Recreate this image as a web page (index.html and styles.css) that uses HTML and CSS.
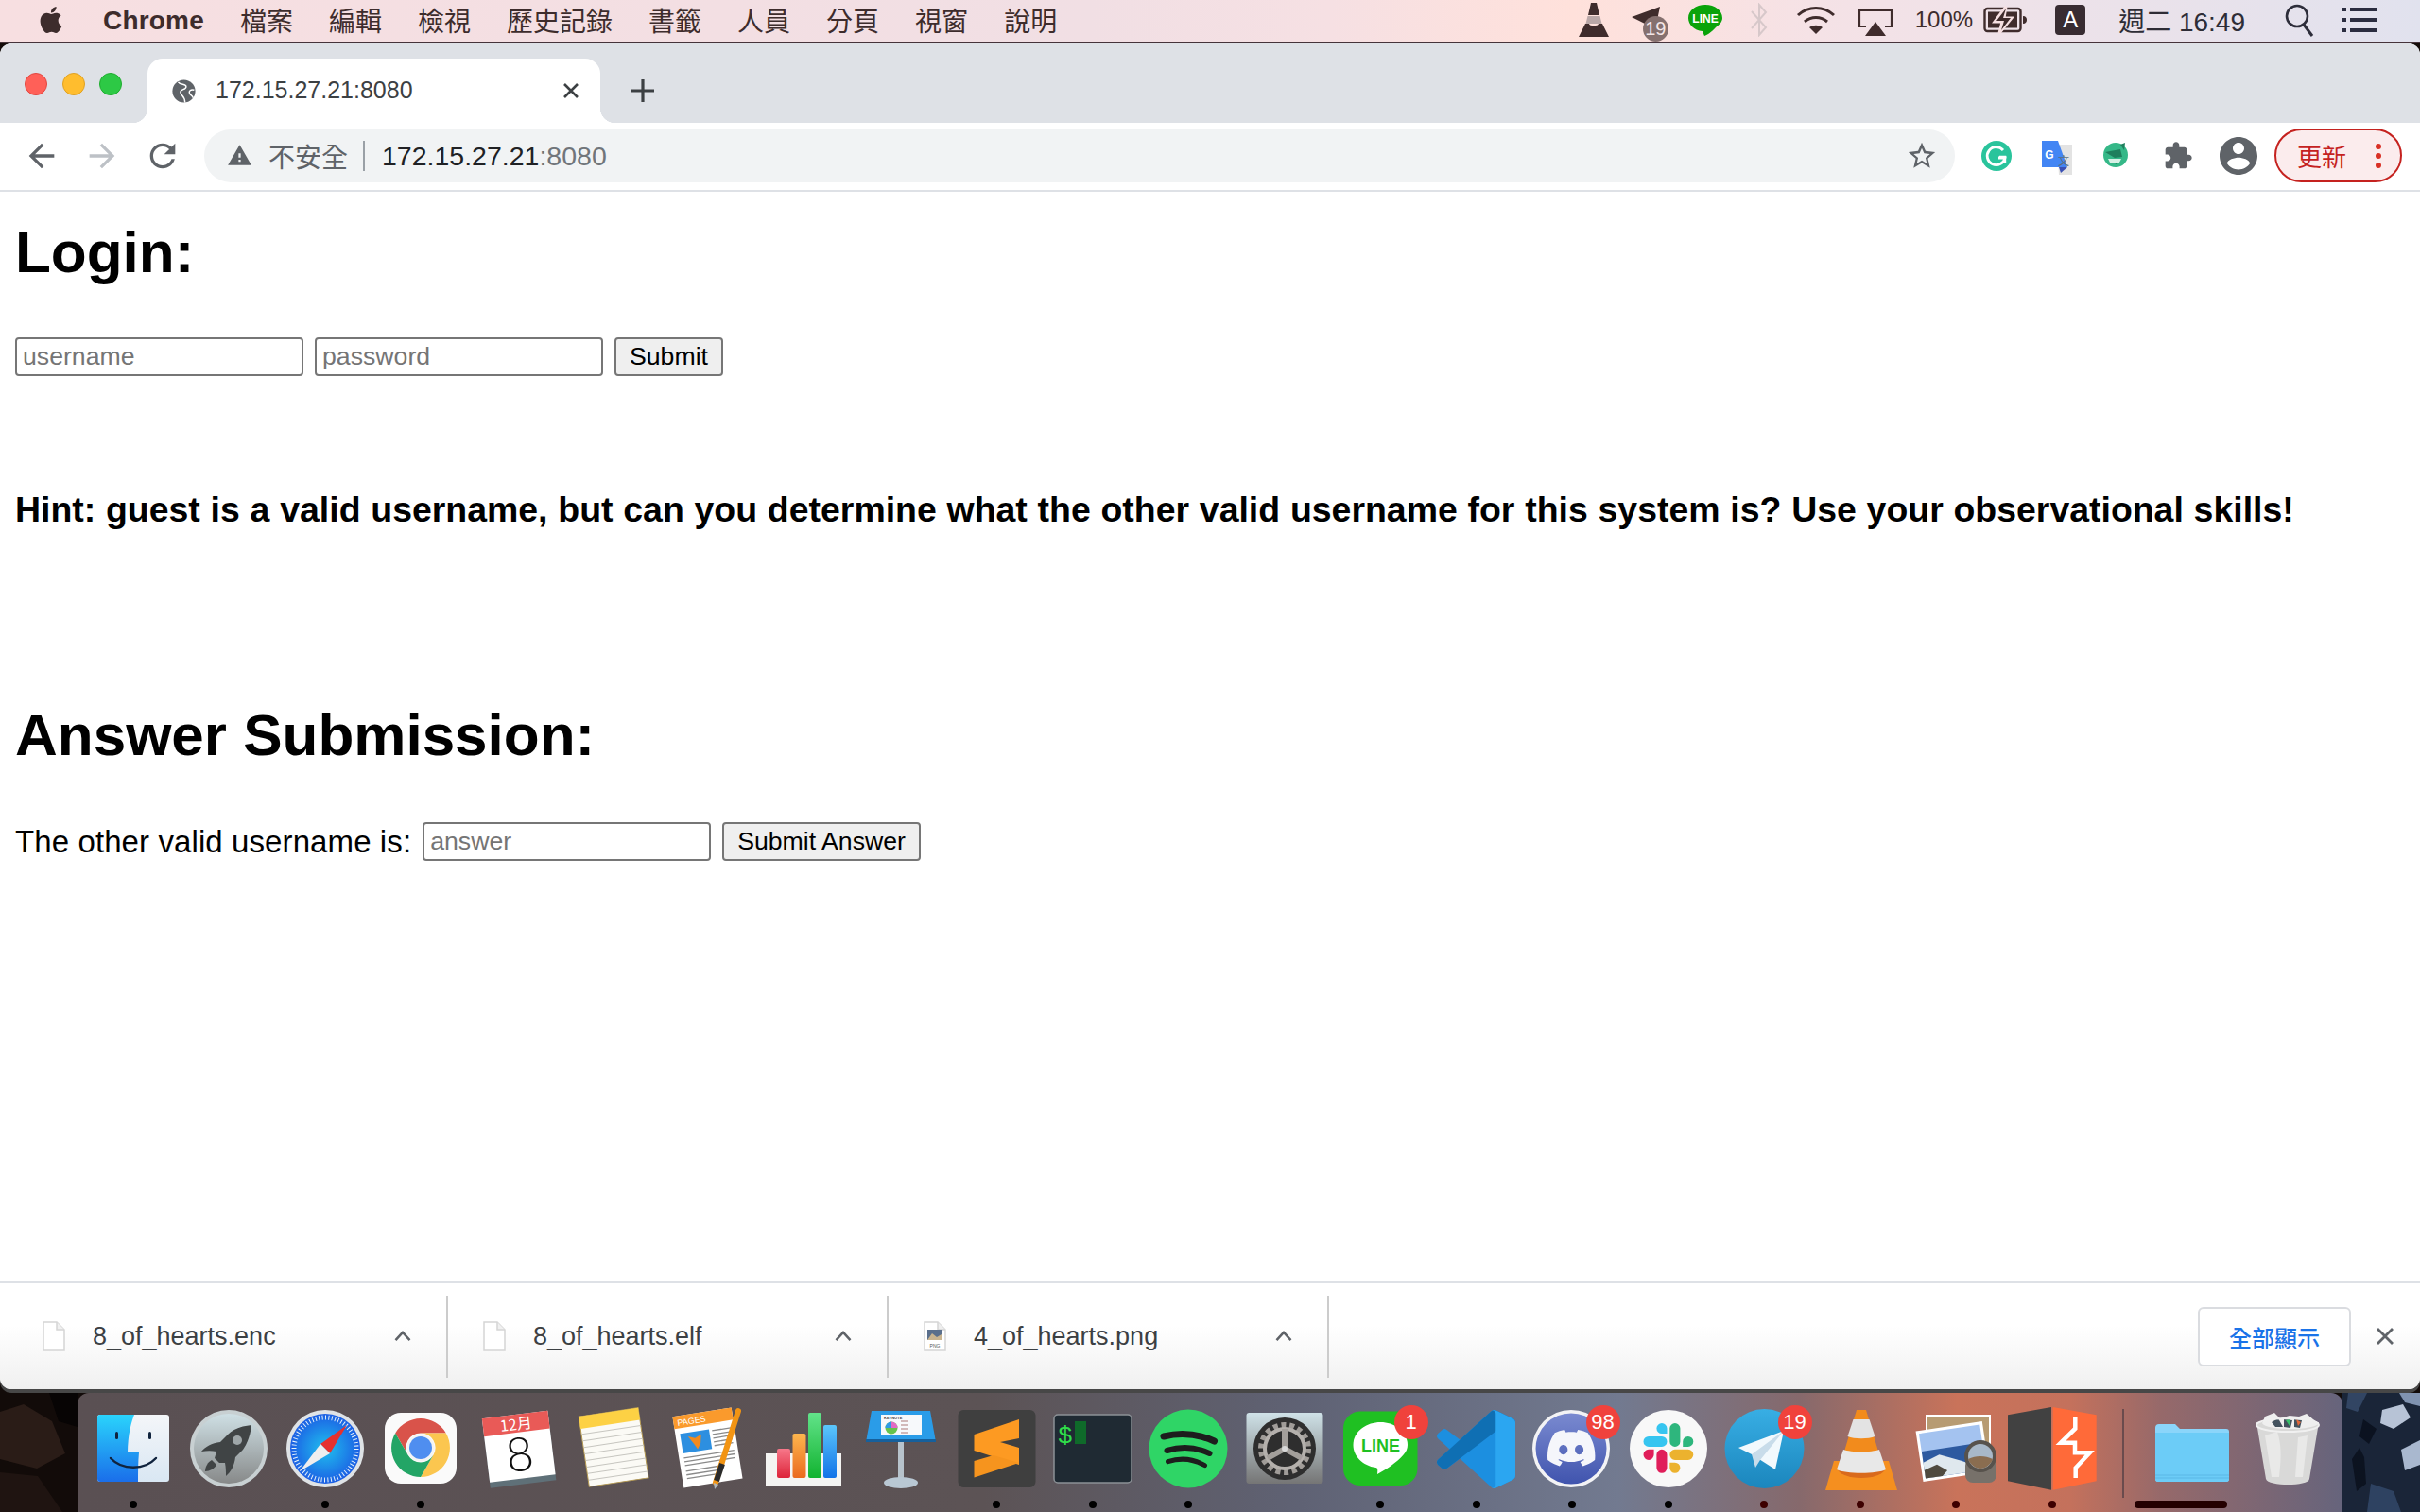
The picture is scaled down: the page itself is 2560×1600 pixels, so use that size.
FILE: index.html
```html
<!DOCTYPE html>
<html lang="zh-Hant">
<head>
    <meta charset="UTF-8">
    <meta name="viewport" content="width=device-width, initial-scale=1.0">
    <title>172.15.27.21:8080</title>
    <link rel="stylesheet" href="styles.css">
</head>
<body>
    <!-- mac menu bar -->
    <header class="menubar">
        <svg class="apple" viewBox="0 0 24 24" width="28" height="32"><path d="M12.152 6.896c-.948 0-2.415-1.078-3.96-1.04-2.04.027-3.91 1.183-4.961 3.014-2.117 3.675-.546 9.103 1.519 12.09 1.013 1.454 2.208 3.09 3.792 3.039 1.52-.065 2.09-.987 3.935-.987 1.831 0 2.35.987 3.96.948 1.637-.026 2.676-1.48 3.676-2.948 1.156-1.688 1.636-3.325 1.662-3.415-.039-.013-3.182-1.221-3.22-4.857-.026-3.04 2.48-4.494 2.597-4.559-1.429-2.09-3.623-2.324-4.39-2.376-2-.156-3.675 1.09-4.61 1.09zM15.53 3.83c.843-1.012 1.4-2.427 1.245-3.83-1.207.052-2.662.805-3.532 1.818-.78.896-1.454 2.338-1.273 3.714 1.338.104 2.715-.688 3.559-1.701"/></svg>
        <nav class="menu-items">
            <span class="app-name">Chrome</span>
            <span>檔案</span>
            <span>編輯</span>
            <span>檢視</span>
            <span>歷史記錄</span>
            <span>書籤</span>
            <span>人員</span>
            <span>分頁</span>
            <span>視窗</span>
            <span>說明</span>
        </nav>
        <div class="status-items">
            <svg viewBox="0 0 32 36" width="32" height="36"><path d="M13 0h6l3 13H10z" fill="#3f2c2c"/><path d="M9.5 14h13l2 8h-17z" fill="#b9a7a7"/><path d="M7 22h4c0 3 10 3 10 0h4l7 14H0z" fill="#3f2c2c"/></svg>
            <div class="status-telegram">
                <svg viewBox="0 0 36 36" width="36" height="36"><path d="M0 15L30 4 25 28 14 22z" fill="#3f2c2c"/></svg>
                <span class="status-badge">19</span>
            </div>
            <svg viewBox="0 0 36 36" width="36" height="36"><path d="M18 2C8 2 0 8 0 16c0 7 6 13 15 14l2 5c1 0 8-4 12-9 4-3 7-6 7-10C36 8 28 2 18 2z" fill="#0aa30a"/><text x="18" y="21" class="line-text">LINE</text></svg>
            <svg viewBox="0 0 30 36" width="30" height="36"><path d="M7 9l15 17-7 8V2l7 8L7 27" fill="none" stroke="#d7c8ca" stroke-width="2"/></svg>
            <svg viewBox="0 0 42 36" width="42" height="36"><g fill="none" stroke="#3f2c2c" stroke-width="3"><path d="M2 13c11-10 27-10 38 0"/><path d="M9 20c7-6 17-6 24 0"/></g><path d="M14 26c4-3 10-3 14 0l-7 7z" fill="#3f2c2c"/></svg>
            <svg viewBox="0 0 36 36" width="36" height="36"><path d="M8 25H1V8h34v17h-7" fill="none" stroke="#3f2c2c" stroke-width="2.2"/><path d="M18 20l11 15H7z" fill="#3f2c2c"/></svg>
            <div class="battery">
                <span>100%</span>
                <svg viewBox="0 0 46 30" width="46" height="30"><rect x="1.5" y="3" width="38" height="24" rx="3" fill="none" stroke="#3f2c2c" stroke-width="2.4"/><rect x="5" y="6.5" width="31" height="17" fill="#3f2c2c"/><path d="M24 1L12 17h8l-3 12 13-16h-8z" fill="#f6e0e2" stroke="#f6e0e2" stroke-width="3"/><path d="M24 3L14 16h8l-3 10 10-13h-8z" fill="#3f2c2c"/><path d="M42 11c3 0 4 2 4 4s-1 4-4 4z" fill="#3f2c2c"/></svg>
            </div>
            <span class="input-source">A</span>
            <span class="clock">週二 16:49</span>
            <svg class="status-search" viewBox="0 0 32 36" width="32" height="36"><circle cx="14" cy="14" r="11" fill="none" stroke="#2d2d3a" stroke-width="2.6"/><path d="M21 23l9 12" stroke="#2d2d3a" stroke-width="3"/></svg>
            <svg viewBox="0 0 36 32" width="36" height="32"><g fill="#2b2d40"><rect x="0" y="3" width="4" height="4"/><rect x="8" y="3" width="28" height="4"/><rect x="0" y="14" width="4" height="4"/><rect x="8" y="14" width="28" height="4"/><rect x="0" y="25" width="4" height="4"/><rect x="8" y="25" width="28" height="4"/></g></svg>
        </div>
    </header>

    <div class="window">
        <div class="tabstrip">
            <div class="traffic-lights">
                <span class="light red"></span>
                <span class="light yellow"></span>
                <span class="light green"></span>
            </div>
            <div class="tab">
                <svg viewBox="0 0 24 24" width="29" height="29"><circle cx="12" cy="12" r="10" fill="#5f6368"/><path d="M7 4c2 3 7 1 7 4s-5 2-5 5 4 3 4 9M21 11c-3-1-5 1-4 3s3 2 3 4" fill="none" stroke="#fff" stroke-width="1.200"/></svg>
                <span class="tab-title">172.15.27.21:8080</span>
                <svg class="tab-close" viewBox="0 0 24 24" width="24" height="24"><path d="M5 5l14 14M19 5L5 19" stroke="#3c4043" stroke-width="2.6"/></svg>
            </div>
            <svg class="new-tab" viewBox="0 0 32 32" width="32" height="32"><path d="M16 4v24M4 16h24" stroke="#3c4043" stroke-width="3.2"/></svg>
        </div>

        <div class="toolbar">
            <svg viewBox="0 0 24 24" width="40" height="40" fill="#5f6368"><path d="M20 11H7.83l5.59-5.59L12 4l-8 8 8 8 1.41-1.41L7.83 13H20v-2z"/></svg>
            <svg viewBox="0 0 24 24" width="40" height="40" fill="#bdc1c6"><path d="M4 11h12.17l-5.59-5.59L12 4l8 8-8 8-1.41-1.41L16.17 13H4v-2z"/></svg>
            <svg viewBox="0 0 24 24" width="40" height="40" fill="#5f6368"><path d="M17.65 6.35C16.2 4.9 14.21 4 12 4c-4.42 0-7.99 3.58-7.99 8s3.57 8 7.99 8c3.73 0 6.84-2.55 7.73-6h-2.08c-.82 2.33-3.04 4-5.65 4-3.31 0-6-2.69-6-6s2.69-6 6-6c1.66 0 3.14.69 4.22 1.78L13 11h7V4l-2.35 2.35z"/></svg>
            <div class="omnibox">
                <svg viewBox="0 0 24 24" width="27" height="27" fill="#5f6368"><path fill-rule="evenodd" d="M1 21h22L12 2zM13 18h-2v-2h2zM13 14h-2v-4h2z"/></svg>
                <span class="not-secure">不安全</span>
                <span class="omni-sep"></span>
                <span class="url">172.15.27.21<span class="url-port">:8080</span></span>
                <svg class="star" viewBox="0 0 24 24" width="34" height="34" fill="#5f6368"><path d="M22 9.24l-7.19-1.03L12 2 9.19 8.22 2 9.24l5.46 4.73L5.82 21 12 17.27 18.18 21l-1.63-7.03L22 9.24zM12 15.4l-3.76 2.27 1-4.28-3.32-2.88 4.38-.38L12 6.1l1.71 4.04 4.38.38-3.32 2.88 1 4.28L12 15.4z"/></svg>
            </div>
            <div class="extensions">
                <svg viewBox="0 0 40 40" width="40" height="40"><circle cx="20" cy="20" r="16" fill="#2ac49c"/><path d="M27 14a9.500 9.500 0 1 0 2 8h-7" fill="none" stroke="#fff" stroke-width="2.800"/><path d="M29 27l0-6-6 0" fill="none" stroke="#fff" stroke-width="2.400"/></svg>
                <svg viewBox="0 0 40 40" width="40" height="40"><path d="M20 8h16v32H22z" fill="#e3e3e3"/><path d="M4 4h17l10 28H4z" fill="#4285f4"/><path d="M22 32h9l-7 6z" fill="#3a50b4"/><text x="12" y="23" class="translate-g">G</text><text x="27" y="30" class="translate-zh">文</text></svg>
                <svg viewBox="0 0 40 40" width="40" height="40"><circle cx="18" cy="19" r="13" fill="#35b888"/><path d="M23 8l5-2-1 8zM7 16l16-3 2 8-8 1zM10 24l13 2-4 3z" fill="#1f7f5d"/><path d="M10 23h14l-2 4H12z" fill="#d6f0e5"/></svg>
                <svg class="puzzle" viewBox="0 0 24 24" fill="#5f6368"><path d="M20.500 11H19V7c0-1.100-.9-2-2-2h-4V3.500C13 2.120 11.880 1 10.500 1S8 2.120 8 3.500V5H4c-1.100 0-1.990.9-1.990 2v3.800H3.500c1.490 0 2.700 1.210 2.700 2.700s-1.210 2.700-2.700 2.700H2V20c0 1.100.9 2 2 2h3.800v-1.500c0-1.490 1.210-2.700 2.700-2.700 1.490 0 2.700 1.210 2.700 2.700V22H17c1.100 0 2-.9 2-2v-4h1.500c1.380 0 2.500-1.120 2.500-2.500S21.880 11 20.500 11z"/></svg>
                <svg viewBox="2 2 20 20" width="40" height="40" fill="#5f6368"><path d="M12 2C6.480 2 2 6.480 2 12s4.480 10 10 10 10-4.480 10-10S17.520 2 12 2zm0 3c1.660 0 3 1.340 3 3s-1.340 3-3 3-3-1.340-3-3 1.340-3 3-3zm0 14.200c-2.500 0-4.710-1.280-6-3.220.03-1.990 4-3.080 6-3.080 1.990 0 5.970 1.090 6 3.080-1.290 1.940-3.500 3.220-6 3.220z"/></svg>
            </div>
            <div class="update-pill">
                <span>更新</span>
                <span class="update-dots"><i></i><i></i><i></i></span>
            </div>
        </div>

        <main class="page">
            <h1 class="login-title">Login:</h1>
            <form class="form-row">
                <input class="text-input" type="text" placeholder="username">
                <input class="text-input" type="password" placeholder="password">
                <button class="form-button" type="button">Submit</button>
            </form>
            <h3 class="hint">Hint: guest is a valid username, but can you determine what the other valid username for this system is? Use your observational skills!</h3>
            <h1 class="answer-title">Answer Submission:</h1>
            <form class="form-row answer-row">
                <span class="answer-label">The other valid username is:</span>
                <input class="text-input" type="text" placeholder="answer">
                <button class="form-button" type="button">Submit Answer</button>
            </form>
        </main>

        <footer class="shelf">
            <div class="download">
                <svg viewBox="0 0 24 32" width="24" height="32"><path d="M1 1h14l8 8v22H1z" fill="#fff" stroke="#d5d5d5" stroke-width="1.500"/><path d="M15 1v8h8" fill="#f0f0f0" stroke="#d5d5d5" stroke-width="1.500"/></svg>
                <span class="download-name">8_of_hearts.enc</span>
                <svg class="chevron" viewBox="0 0 24 24" width="20" height="20"><path d="M3 17l9-10 9 10" fill="none" stroke="#5f6368" stroke-width="3"/></svg>
            </div>
            <div class="download">
                <svg viewBox="0 0 24 32" width="24" height="32"><path d="M1 1h14l8 8v22H1z" fill="#fff" stroke="#d5d5d5" stroke-width="1.500"/><path d="M15 1v8h8" fill="#f0f0f0" stroke="#d5d5d5" stroke-width="1.500"/></svg>
                <span class="download-name">8_of_hearts.elf</span>
                <svg class="chevron" viewBox="0 0 24 24" width="20" height="20"><path d="M3 17l9-10 9 10" fill="none" stroke="#5f6368" stroke-width="3"/></svg>
            </div>
            <div class="download">
                <svg viewBox="0 0 24 32" width="24" height="32"><path d="M1 1h14l8 8v22H1z" fill="#fff" stroke="#d5d5d5" stroke-width="1.500"/><path d="M15 1v8h8" fill="#eee" stroke="#d5d5d5" stroke-width="1.500"/><rect x="4" y="9" width="15" height="11" fill="#5a6f8c"/><path d="M4 20l5-7 5 4 5-3v6z" fill="#c9b48f"/><text x="12" y="28" class="png-tag">PNG</text></svg>
                <span class="download-name">4_of_hearts.png</span>
                <svg class="chevron" viewBox="0 0 24 24" width="20" height="20"><path d="M3 17l9-10 9 10" fill="none" stroke="#5f6368" stroke-width="3"/></svg>
            </div>
            <span class="show-all">全部顯示</span>
            <svg class="shelf-close" viewBox="0 0 24 24" width="24" height="24"><path d="M4 4l16 16M20 4L4 20" stroke="#5f6368" stroke-width="2.800"/></svg>
        </footer>
    </div>

    <div class="desktop-row">
        <svg class="wall-left" viewBox="0 0 82 126" width="82" height="126"><rect width="82" height="126" fill="#120b09"/><path d="M0 20l25-8 30 18 14 34-30 16L0 70z" fill="#2a1c17"/><path d="M0 84l40 4 26 38H0z" fill="#1f1411"/><path d="M52 0h30v36L62 30z" fill="#070404"/></svg>
        <div class="dock">
            <div class="dock-item">
                <svg viewBox="0 0 84 84" width="84" height="84">
                    <defs>
                        <linearGradient id="finderL" x1="0" y1="0" x2="0" y2="1"><stop offset="0" stop-color="#2ad4fc"/><stop offset="1" stop-color="#1a6eea"/></linearGradient>
                        <linearGradient id="finderR" x1="0" y1="0" x2="0" y2="1"><stop offset="0" stop-color="#f4f6f9"/><stop offset="1" stop-color="#d9e7f3"/></linearGradient>
                    </defs>
                    <rect x="4" y="6" width="76" height="71" rx="3" fill="url(#finderR)"/>
                    <path d="M7 6h36c-4 10-7 25-7 40h12c-1 10-1 21-1 31H7a3 3 0 0 1-3-3V9a3 3 0 0 1 3-3z" fill="url(#finderL)"/>
                    <rect x="23" y="24" width="3" height="8" rx="1.500" fill="#10233d"/><rect x="58" y="24" width="3" height="8" rx="1.500" fill="#10233d"/>
                    <path d="M18 52c12 13 36 13 48 0" fill="none" stroke="#10233d" stroke-width="2.400" stroke-linecap="round"/>
                </svg>
                <span class="dot"></span>
            </div>
            <div class="dock-item no-dot">
                <svg viewBox="0 0 84 84" width="84" height="84">
                    <defs>
                        <linearGradient id="padBg" x1="0" y1="0" x2="0" y2="1"><stop offset="0" stop-color="#cfe0e5"/><stop offset="1" stop-color="#878989"/></linearGradient>
                    </defs>
                    <circle cx="42" cy="42" r="41" fill="#c8d0d2"/><circle cx="42" cy="42" r="37" fill="url(#padBg)"/>
                    <path d="M66 17c-10 1-19 4-25 10l-8 8c-9 1-16 5-20 10 6-1 11-1 16 0l-2 7 5 5 6 0c1 5 1 10 1 14 5-4 9-11 10-20l8-8c5-7 8-16 9-26z" fill="#404445"/>
                    <circle cx="51" cy="33" r="5" fill="#9ea6a8"/>
                    <path d="M24 54c-4 2-7 7-7 12 5 0 10-3 12-7z" fill="#404445"/>
                </svg>
            </div>
            <div class="dock-item">
                <svg viewBox="0 0 84 84" width="84" height="84">
                    <defs>
                        <radialGradient id="safariBg"><stop offset="0" stop-color="#1fc0ee"/><stop offset="1" stop-color="#1c5fe4"/></radialGradient>
                    </defs>
                    <circle cx="42" cy="42" r="41" fill="#dfe3e6"/><circle cx="42" cy="42" r="37" fill="url(#safariBg)"/>
                    <circle cx="42" cy="42" r="33" fill="none" stroke="#e8f2fb" stroke-width="5" stroke-dasharray="1 2.450"/>
                    <path d="M65 17L37 37l10 10z" fill="#e5312f"/><path d="M15 66l22-29 10 10z" fill="#eeeeee"/>
                </svg>
                <span class="dot"></span>
            </div>
            <div class="dock-item">
                <svg viewBox="0 0 84 84" width="84" height="84">
                    <rect x="4" y="4" width="76" height="75" rx="17" fill="#fafafa"/>
                    <path d="M15.200 25.500A31 31 0 0 1 68.800 25.500H42A15.500 15.500 0 0 0 28.600 48.800Z" fill="#d9534a"/>
                    <path d="M68.800 25.500A31 31 0 0 1 42 72L55.400 48.800A15.500 15.500 0 0 0 42 25.500Z" fill="#fbc64f"/>
                    <path d="M42 72A31 31 0 0 1 15.200 25.500L28.600 48.800A15.500 15.500 0 0 0 55.400 48.800Z" fill="#23a566"/>
                    <circle cx="42" cy="41" r="14.500" fill="#f4f4f4"/><circle cx="42" cy="41" r="12" fill="#4f8ef0"/>
                </svg>
                <span class="dot"></span>
            </div>
            <div class="dock-item no-dot">
                <svg viewBox="0 0 84 84" width="84" height="84">
                    <g transform="rotate(-7 42 42)">
                        <rect x="9" y="9" width="70" height="71" fill="#5f7078"/>
                        <rect x="9" y="6" width="70" height="68" fill="#fff"/>
                        <rect x="9" y="6" width="70" height="19" fill="#e95a57"/>
                        <text x="44" y="22" class="cal-month">12月</text>
                        <text x="44" y="66" class="cal-day">8</text>
                    </g>
                </svg>
            </div>
            <div class="dock-item no-dot">
                <svg viewBox="0 0 84 84" width="84" height="84" class="tall">
                    <g transform="rotate(-8.500 43 41)">
                        <rect x="11.500" y="3" width="63.500" height="75" fill="#fbfaf5" stroke="#b59a52"/>
                        <rect x="11.500" y="3" width="63.500" height="13" fill="#fdd144"/>
                        <path d="M12 22h63M12 29h63M12 36h63M12 43h63M12 50h63M12 57h63M12 64h63M12 71h63" stroke="#c7c6c0" stroke-width="1"/>
                    </g>
                </svg>
            </div>
            <div class="dock-item no-dot">
                <svg viewBox="0 0 84 84" width="84" height="84" class="tall">
                    <g transform="rotate(-9 40 41)">
                        <rect x="9" y="3" width="63" height="76" fill="#fff"/>
                        <rect x="9" y="3" width="63" height="13" fill="#fa9a2c"/>
                        <text x="13" y="13.500" class="pages-tag">PAGES</text>
                        <rect x="14" y="22" width="31" height="21" fill="#2d8fe0"/>
                        <path d="M22 26l7 3 7-3-2 9-4 6-3-6z" fill="#f28a1e"/>
                        <path d="M48 24h20M48 28h20M48 32h20M48 36h20M48 40h20M14 48h54M14 52h54M14 56h54M14 62h40M14 66h38M14 70h36" stroke="#8a8a8a" stroke-width="1.300"/>
                    </g>
                    <path d="M73 2L49 78" stroke="#f29413" stroke-width="6" stroke-linecap="round"/>
                    <path d="M56 58L50 76" stroke="#2a2a2a" stroke-width="6"/>
                    <path d="M47 78l5 2-4 5z" fill="#aeb6bd"/>
                </svg>
            </div>
            <div class="dock-item no-dot">
                <svg viewBox="0 0 84 84" width="84" height="84">
                    <defs>
                        <linearGradient id="barR" x1="0" y1="0" x2="0" y2="1"><stop offset="0" stop-color="#f7788a"/><stop offset="1" stop-color="#dd2439"/></linearGradient>
                        <linearGradient id="barO" x1="0" y1="0" x2="0" y2="1"><stop offset="0" stop-color="#fdb64e"/><stop offset="1" stop-color="#ea6a1e"/></linearGradient>
                        <linearGradient id="barG" x1="0" y1="0" x2="0" y2="1"><stop offset="0" stop-color="#62e38a"/><stop offset="1" stop-color="#12b330"/></linearGradient>
                        <linearGradient id="barB" x1="0" y1="0" x2="0" y2="1"><stop offset="0" stop-color="#5bc6fb"/><stop offset="1" stop-color="#1273e8"/></linearGradient>
                    </defs>
                    <rect x="1" y="47" width="80" height="34" fill="#f4f4f2"/>
                    <rect x="13" y="42" width="14" height="31" rx="2" fill="url(#barR)"/>
                    <rect x="29.500" y="26" width="14" height="47" rx="2" fill="url(#barO)"/>
                    <rect x="46" y="4" width="14" height="69" rx="2" fill="url(#barG)"/>
                    <rect x="62" y="17" width="14" height="56" rx="2" fill="url(#barB)"/>
                </svg>
            </div>
            <div class="dock-item no-dot">
                <svg viewBox="0 0 84 84" width="84" height="84">
                    <rect x="39" y="34" width="6" height="40" fill="#b7c3cc"/>
                    <ellipse cx="42" cy="78" rx="18" ry="6" fill="#b9c8d4"/>
                    <path d="M11 2h62l6 33H5z" fill="#2a9ce8"/>
                    <rect x="5" y="32" width="74" height="3" fill="#16609c"/>
                    <rect x="21" y="6" width="43" height="22" fill="#f7f9fb"/>
                    <text x="24" y="11" class="key-tag">KEYNOTE</text>
                    <circle cx="32" cy="20" r="6.500" fill="#66c34d"/><path d="M32 20v-6.500a6.500 6.500 0 0 1 6.500 6.500z" fill="#e36bc5"/><path d="M32 20l-6.500 0a6.500 6.500 0 0 1 6.500-6.500z" fill="#2f9be6"/>
                    <path d="M42 13h8M42 17h8M42 21h8M42 25h8" stroke="#c5a4a4" stroke-width="1.500"/>
                </svg>
            </div>
            <div class="dock-item">
                <svg viewBox="0 0 84 84" width="84" height="84">
                    <rect x="1.500" y="1" width="82" height="82" rx="6" fill="#3f3f3f"/>
                    <path d="M66 11L18.500 27V44L66 59V41L46 35L66 31Z" fill="#fd9a22"/>
                    <path d="M39 49L18.500 55V72.500L66 57Z" fill="#f6941e"/>
                </svg>
                <span class="dot"></span>
            </div>
            <div class="dock-item">
                <svg viewBox="0 0 84 84" width="84" height="84">
                    <rect x="1" y="6" width="82" height="72" rx="4" fill="#1f2a33" stroke="#8c9196" stroke-width="1.500"/>
                    <text x="5" y="36" class="term-prompt">$</text>
                    <rect x="23" y="13" width="12" height="24" fill="#0f6a2a"/>
                </svg>
                <span class="dot"></span>
            </div>
            <div class="dock-item">
                <svg viewBox="0 0 84 84" width="84" height="84">
                    <circle cx="42" cy="42" r="41.500" fill="#2fd566"/>
                    <g fill="none" stroke="#1d1d1d" stroke-linecap="round">
                        <path d="M16 29Q43 22 69.500 34" stroke-width="7"/>
                        <path d="M19.500 44Q43 37 64.500 47" stroke-width="6"/>
                        <path d="M20.500 55.700Q41 49 59.500 59.700" stroke-width="5"/>
                    </g>
                </svg>
                <span class="dot"></span>
            </div>
            <div class="dock-item no-dot">
                <svg viewBox="0 0 84 84" width="84" height="84">
                    <defs>
                        <linearGradient id="prefBg" x1="0" y1="0" x2="0" y2="1"><stop offset="0" stop-color="#cfe2e8"/><stop offset="1" stop-color="#757575"/></linearGradient>
                    </defs>
                    <rect x="1.500" y="4" width="81" height="75" rx="3" fill="url(#prefBg)"/>
                    <circle cx="42" cy="42" r="33" fill="#2e2e2e"/>
                    <circle cx="42" cy="42" r="25" fill="none" stroke="#a09c98" stroke-width="6" stroke-dasharray="5 3.730"/>
                    <circle cx="42" cy="42" r="21" fill="#2e2e2e" stroke="#b4b0ac" stroke-width="4"/>
                    <path d="M42 42V21M42 42L24 52M42 42L60 52" stroke="#a39f9b" stroke-width="6"/>
                    <circle cx="42" cy="42" r="3" fill="#d8d8d8"/>
                </svg>
            </div>
            <div class="dock-item">
                <svg viewBox="0 0 84 84" width="84" height="84">
                    <rect x="3" y="2.500" width="78.500" height="78.500" rx="18" fill="#1fc022"/>
                    <path d="M42.500 14C26.500 14 13.500 24.500 13.500 38c0 12 10 22 24 24 2 .5 2 2 1.500 7 6-3 22-13 28-21 2.500-3 4-6 4-10 0-13.500-13-24-28.500-24z" fill="#fff"/>
                    <text x="42.500" y="45" class="line-big">LINE</text>
                </svg>
                <span class="dot"></span>
                <span class="badge">1</span>
            </div>
            <div class="dock-item">
                <svg viewBox="0 0 84 84" width="84" height="84">
                    <g transform="translate(0 1) scale(.83)">
                        <path fill="#1c8fe0" d="M70.912 99.317C72.487 99.931 74.283 99.891 75.873 99.126L96.461 89.220C98.624 88.179 100 85.989 100 83.587V16.413C100 14.011 98.624 11.822 96.461 10.781L75.873.874C73.786-.130 71.345.116 69.514 1.447 69.252 1.637 69.003 1.849 68.769 2.083L29.355 38.042 12.187 25.010C10.589 23.797 8.354 23.896 6.869 25.246L1.363 30.255C-.453 31.906-.455 34.763 1.359 36.417L16.247 50 1.359 63.583C-.455 65.237-.453 68.094 1.363 69.745L6.869 74.754C8.354 76.104 10.589 76.204 12.187 74.991L29.355 61.959 68.769 97.917C69.393 98.541 70.125 99.010 70.912 99.317ZM75.015 27.299L45.109 50 75.015 72.701V27.299Z"/>
                        <path fill="#0f6fb3" d="M96.461 10.796L75.857.876C73.472-.273 70.622.212 68.750 2.083L1.299 63.583C-.516 65.237-.514 68.094 1.303 69.745L6.813 74.754C8.298 76.104 10.535 76.204 12.134 74.991L93.361 13.370C96.086 11.303 100 13.246 100 16.667V16.428C100 14.027 98.625 11.838 96.461 10.796Z"/>
                        <path fill="#2ba6f1" d="M75.857 99.124C73.472 100.273 70.622 99.788 68.750 97.917 71.056 100.223 75 98.589 75 95.333V4.667C75 1.411 71.056-.222 68.750 2.083 70.622.211 73.470-.270 75.850.870L96.460 10.790C98.620 11.830 100 14.020 100 16.420V83.580C100 85.980 98.620 88.170 96.460 89.200Z"/>
                    </g>
                </svg>
                <span class="dot"></span>
            </div>
            <div class="dock-item">
                <svg viewBox="0 0 84 84" width="84" height="84">
                    <defs>
                        <linearGradient id="discordBg" x1="0" y1="0" x2="0" y2="1"><stop offset="0" stop-color="#7a8ad0"/><stop offset="1" stop-color="#4054ae"/></linearGradient>
                    </defs>
                    <circle cx="41" cy="42" r="41" fill="#f3f3f5"/><circle cx="41" cy="42" r="37.500" fill="url(#discordBg)"/>
                    <path transform="translate(16 16) scale(2.100)" fill="#f5f6fb" d="M20.317 4.370a19.791 19.791 0 00-4.885-1.515.074.074 0 00-.079.037c-.211.375-.445.865-.608 1.250-1.845-.276-3.680-.276-5.487 0-.164-.393-.406-.874-.618-1.250a.077.077 0 00-.079-.037 19.736 19.736 0 00-4.885 1.515.070.070 0 00-.032.028C.533 9.046-.319 13.580.099 18.058a.082.082 0 00.031.056c2.053 1.508 4.041 2.423 5.993 3.029a.078.078 0 00.084-.028c.462-.630.873-1.295 1.226-1.994a.076.076 0 00-.042-.106c-.653-.248-1.274-.549-1.872-.892a.077.077 0 01-.008-.128c.126-.094.252-.192.372-.291a.074.074 0 01.078-.011c3.928 1.793 8.180 1.793 12.061 0a.074.074 0 01.079.010c.120.099.246.198.373.292a.077.077 0 01-.007.128 12.299 12.299 0 01-1.873.891.077.077 0 00-.041.107c.360.698.772 1.363 1.225 1.993a.076.076 0 00.084.029c1.961-.607 3.950-1.522 6.002-3.029a.077.077 0 00.031-.055c.500-5.177-.838-9.674-3.548-13.660a.061.061 0 00-.031-.029zM8.020 15.331c-1.183 0-2.157-1.086-2.157-2.419 0-1.333.956-2.419 2.157-2.419 1.211 0 2.176 1.095 2.157 2.419 0 1.333-.956 2.419-2.157 2.419zm7.975 0c-1.183 0-2.157-1.086-2.157-2.419 0-1.333.955-2.419 2.157-2.419 1.211 0 2.176 1.095 2.157 2.419 0 1.333-.946 2.419-2.157 2.419z"/>
                </svg>
                <span class="dot"></span>
                <span class="badge">98</span>
            </div>
            <div class="dock-item">
                <svg viewBox="0 0 84 84" width="84" height="84">
                    <circle cx="42" cy="42" r="41" fill="#f8f8f8"/>
                    <g transform="translate(15.500 15) scale(2.200)">
                        <path fill="#e01e5a" d="M5.042 15.165a2.528 2.528 0 0 1-2.520 2.523A2.528 2.528 0 0 1 0 15.165a2.527 2.527 0 0 1 2.522-2.520h2.520v2.520zM6.313 15.165a2.527 2.527 0 0 1 2.521-2.520 2.527 2.527 0 0 1 2.521 2.520v6.313A2.528 2.528 0 0 1 8.834 24a2.528 2.528 0 0 1-2.521-2.522v-6.313z"/>
                        <path fill="#36c5f0" d="M8.834 5.042a2.528 2.528 0 0 1-2.521-2.520A2.528 2.528 0 0 1 8.834 0a2.528 2.528 0 0 1 2.521 2.522v2.520H8.834zM8.834 6.313a2.528 2.528 0 0 1 2.521 2.521 2.528 2.528 0 0 1-2.521 2.521H2.522A2.528 2.528 0 0 1 0 8.834a2.528 2.528 0 0 1 2.522-2.521h6.312z"/>
                        <path fill="#2eb67d" d="M18.956 8.834a2.528 2.528 0 0 1 2.522-2.521A2.528 2.528 0 0 1 24 8.834a2.528 2.528 0 0 1-2.522 2.521h-2.522V8.834zM17.688 8.834a2.528 2.528 0 0 1-2.523 2.521 2.527 2.527 0 0 1-2.520-2.521V2.522A2.527 2.527 0 0 1 15.165 0a2.528 2.528 0 0 1 2.523 2.522v6.312z"/>
                        <path fill="#ecb22e" d="M15.165 18.956a2.528 2.528 0 0 1 2.523 2.522A2.528 2.528 0 0 1 15.165 24a2.527 2.527 0 0 1-2.520-2.522v-2.522h2.520zM15.165 17.688a2.527 2.527 0 0 1-2.520-2.523 2.526 2.526 0 0 1 2.520-2.520h6.313A2.527 2.527 0 0 1 24 15.165a2.528 2.528 0 0 1-2.522 2.523h-6.313z"/>
                    </g>
                </svg>
                <span class="dot"></span>
            </div>
            <div class="dock-item">
                <svg viewBox="0 0 84 84" width="84" height="84">
                    <defs>
                        <linearGradient id="tgBg" x1="0" y1="0" x2="0" y2="1"><stop offset="0" stop-color="#38aee4"/><stop offset="1" stop-color="#1b86bd"/></linearGradient>
                    </defs>
                    <circle cx="42.500" cy="42" r="42" fill="url(#tgBg)"/>
                    <path d="M63 23L15 41l14 7 25 16z" fill="#f2f9fd"/>
                    <path d="M63 23L29 48l4 14 5-8z" fill="#c8dcea"/>
                </svg>
                <span class="dot dot-warm"></span>
                <span class="badge">19</span>
            </div>
            <div class="dock-item">
                <svg viewBox="0 0 84 84" width="84" height="84" class="tall">
                    <path d="M14 55h58l9 31H5z" fill="#f58f1f"/>
                    <ellipse cx="43" cy="63" rx="25" ry="10" fill="#d96a1c"/>
                    <path d="M38 1h10l16 54c-6 8-36 8-42 0z" fill="#f28b1c"/>
                    <path d="M34.500 11h17l6 18c-7 3-22 3-29 0z" fill="#e3e3e3"/>
                    <path d="M24 44c8 3 30 3 38 0l7 21c-9 5-43 5-52 0z" fill="#e8e8e8" transform="translate(0 -1)"/>
                </svg>
                <span class="dot dot-warm"></span>
            </div>
            <div class="dock-item">
                <svg viewBox="0 0 84 84" width="84" height="84">
                    <rect x="10" y="6" width="69" height="44" fill="#fff"/>
                    <rect x="12" y="8" width="65" height="40" fill="#b79b72"/>
                    <g transform="rotate(-8.500 39 44)">
                        <rect x="3" y="18" width="71" height="54" fill="#fff"/>
                        <rect x="6" y="21" width="65" height="22" fill="#a4c3f0"/>
                        <rect x="6" y="40" width="65" height="29" fill="#2d5aa0"/>
                        <path d="M6 52l18-6 22 10 25 13H6z" fill="#dfe8ee"/>
                        <path d="M6 60l14-4 10 8-6 5H6z" fill="#4f4a3f"/>
                    </g>
                    <rect x="52" y="52" width="33" height="26" rx="8" fill="#77716a"/>
                    <circle cx="68" cy="50" r="17" fill="#57524c"/><circle cx="68" cy="50" r="13" fill="#a8b8c8"/>
                    <path d="M55 53c8-4 18-4 26 0-2 6-8 10-13 10s-11-4-13-10z" fill="#8a6d50"/>
                </svg>
                <span class="dot dot-warm"></span>
            </div>
            <div class="dock-item">
                <svg viewBox="0 0 84 84" width="84" height="84" class="tall">
                    <path d="M-5 6.300L41-2V85.700L-5 76.300Z" fill="#414141"/>
                    <path d="M42.700-2L88.700 6.300V76.300L42.700 85.700Z" fill="#ff6a39"/>
                    <path d="M66.300 9V20.700L51 35.700H66V46.300H81.700L66.700 62.300V73" fill="none" stroke="#fff" stroke-width="4.500"/>
                </svg>
                <span class="dot dot-warm"></span>
            </div>
            <span class="dock-sep"></span>
            <div class="dock-item folder-item">
                <svg viewBox="0 0 84 84" width="84" height="84">
                    <path d="M3 20a4 4 0 0 1 4-4h17l5 5h49a3 3 0 0 1 3 3v50a3 3 0 0 1-3 3H6a3 3 0 0 1-3-3z" fill="#8bd5fa"/>
                    <path d="M3 25h78v49a3 3 0 0 1-3 3H6a3 3 0 0 1-3-3z" fill="#6cccf7"/>
                    <path d="M3 70h78M3 73h78" stroke="#5ab8e6" stroke-width="1"/>
                </svg>
                <span class="dot-bar"></span>
            </div>
            <div class="dock-item no-dot">
                <svg viewBox="0 0 84 84" width="84" height="84">
                    <path d="M8 14h66l-10 60c-1 8-44 8-46 0z" fill="#d9d9d8"/>
                    <path d="M30 24c6 18 3 36 2 48h-8l-7-44zM52 30l10-2-5 44h-8z" fill="#e9e9e8"/>
                    <path d="M17 8l10-4 6 6 10-3 10 1 8-3 7 6 6 4c-5 8-56 8-60 0z" fill="#efefef"/>
                    <path d="M24 14l7-4 5 9h-8zM37 11l9 1-2 8-7-1zM48 11l8 1-2 8-6-1z" fill="#43525e"/>
                    <path d="M39 12l5-1-1 7z" fill="#37c26a"/><path d="M50 11l5 3-3 4z" fill="#e0663a"/>
                    <ellipse cx="41" cy="17" rx="33" ry="7" fill="none" stroke="#f0f0f0" stroke-width="2"/>
                </svg>
            </div>
        </div>
        <svg class="wall-right" viewBox="0 0 82 126" width="82" height="126"><rect width="82" height="126" fill="#1a2538"/><path d="M6 0h20L16 20 4 16z" fill="#324563"/><path d="M42 18l22-6 8 14-18 12-14-6z" fill="#b7c3d6"/><path d="M60 0h22v14L66 10z" fill="#8093b0"/><path d="M10 70l8-12 5 10 2 28-10 8z" fill="#0c1320"/><path d="M62 60l20-10v26L66 82z" fill="#a9b8cf"/><path d="M30 96l24 8 8 22H26z" fill="#2e4261"/><path d="M22 28l14 10-8 16-10-8z" fill="#0b1220"/></svg>
    </div>
</body>
</html>
```

FILE: styles.css
```css
* {
    box-sizing: border-box;
}
html, body {
    margin: 0;
    padding: 0;
}
body {
    width: 2560px;
    height: 1600px;
    overflow: hidden;
    background-color: #120b09;
    font-family: "Liberation Sans", "Noto Sans CJK TC", sans-serif;
    display: flex;
    flex-direction: column;
}

/* menu bar */
.menubar {
    height: 46px;
    flex-shrink: 0;
    display: flex;
    align-items: center;
    padding: 0 46px 2px 40px;
    color: #3d2c2c;
    font-size: 28px;
    border-bottom: 2px solid #45333a;
    background: linear-gradient(to right, #f7dfe1 0%, #f1dfe4 45%, #f6e0e3 55%, #ffe1db 65%, #f5e2e6 75%, #e1e2ee 100%);
}
.apple {
    fill: #3d2c2c;
    margin-right: 41px;
}
.menu-items {
    display: flex;
    align-items: center;
    gap: 38px;
    line-height: 40px;
    margin-top: 6px;
}
.app-name {
    font-weight: 700;
    letter-spacing: 0.2px;
    padding-bottom: 4px;
}
.status-items {
    margin-left: auto;
    display: flex;
    align-items: center;
    gap: 24px;
}
.status-items svg {
    display: block;
}
.status-telegram {
    position: relative;
    width: 36px;
    height: 36px;
}
.status-badge {
    position: absolute;
    right: -3px;
    bottom: -5px;
    width: 27px;
    height: 27px;
    border-radius: 50%;
    background-color: #85706f;
    color: #f4e6e6;
    font-size: 20px;
    line-height: 27px;
    text-align: center;
}
.line-text {
    fill: #fff;
    font-size: 12px;
    font-weight: 700;
    text-anchor: middle;
}
.battery {
    display: flex;
    align-items: center;
    gap: 11px;
    font-size: 24px;
}
.input-source {
    width: 32px;
    height: 32px;
    margin-left: 6px;
    border-radius: 4px;
    background-color: #382c31;
    color: #fff;
    font-size: 24px;
    line-height: 32px;
    text-align: center;
}
.clock {
    margin-left: 11px;
    color: #2e2d36;
}
.status-search {
    margin: 0 6px 0 17px;
}

/* browser window */
.window {
    height: 1424px;
    flex-shrink: 0;
    display: flex;
    flex-direction: column;
    background-color: #fff;
    border-radius: 12px;
    box-shadow: 0 4px 0 #474747;
    position: relative;
    z-index: 1;
    overflow: hidden;
}
.tabstrip {
    height: 84px;
    flex-shrink: 0;
    display: flex;
    align-items: flex-end;
    background-color: #dee1e6;
}
.traffic-lights {
    align-self: center;
    display: flex;
    gap: 15.5px;
    padding: 2px 0 0 26px;
    width: 156px;
}
.light {
    width: 24px;
    height: 24px;
    border-radius: 50%;
}
.red {
    background-color: #ff6058;
    border: 1px solid #e2463f;
}
.yellow {
    background-color: #ffbd2e;
    border: 1px solid #dfa123;
}
.green {
    background-color: #2dc945;
    border: 1px solid #1fad2f;
}
.tab {
    width: 479px;
    height: 68px;
    display: flex;
    align-items: center;
    padding: 0 19px 0 24px;
    background-color: #fff;
    border-radius: 16px 16px 0 0;
    position: relative;
}
.tab::before,
.tab::after {
    content: "";
    position: absolute;
    bottom: 0;
    width: 16px;
    height: 16px;
}
.tab::before {
    left: -16px;
    background: radial-gradient(circle at 0 0, transparent 16px, #fff 16.5px);
}
.tab::after {
    right: -16px;
    background: radial-gradient(circle at 100% 0, transparent 16px, #fff 16.5px);
}
.tab-title {
    margin: 0 0 2px 19px;
    font-size: 25px;
    color: #3c4043;
}
.tab-close {
    margin-left: auto;
}
.new-tab {
    margin: 0 0 18px 29px;
}
.toolbar {
    height: 73px;
    flex-shrink: 0;
    display: flex;
    align-items: center;
    gap: 24px;
    padding: 0 19px 2px 24px;
    border-bottom: 2px solid #dee1e6;
}
.omnibox {
    width: 1852px;
    height: 56px;
    flex-shrink: 0;
    display: flex;
    align-items: center;
    padding: 0 18px 0 24px;
    border-radius: 28px;
    background-color: #f1f3f4;
}
.not-secure {
    margin-left: 17px;
    font-size: 28px;
    color: #5f6368;
}
.omni-sep {
    width: 2px;
    height: 32px;
    margin: 0 18px 0 16px;
    background-color: #9aa0a6;
}
.url {
    margin-top: 2px;
    font-size: 28.5px;
    color: #202124;
}
.url-port {
    color: #70757a;
}
.star {
    margin-left: auto;
}
.extensions {
    display: flex;
    align-items: center;
    gap: 24px;
}
.extensions svg {
    display: block;
    width: 40px;
    height: 40px;
}
.extensions .puzzle {
    width: 32px;
    height: 32px;
    margin: 0 4px;
}
.translate-g {
    fill: #fff;
    font-size: 12px;
    font-weight: 700;
    text-anchor: middle;
}
.translate-zh {
    fill: #5f6e78;
    font-size: 12px;
    font-family: "Noto Sans CJK TC", sans-serif;
    text-anchor: middle;
}
.update-pill {
    width: 135px;
    height: 57px;
    margin-left: -6px;
    display: flex;
    align-items: center;
    justify-content: space-between;
    padding: 0 20px 0 22px;
    border: 2px solid #c5221f;
    border-radius: 29px;
    background-color: #fbeced;
    color: #c5221f;
    font-size: 26px;
}
.update-dots {
    display: flex;
    flex-direction: column;
    gap: 4px;
}
.update-dots i {
    display: block;
    width: 6px;
    height: 6px;
    border-radius: 50%;
    background-color: #d93025;
}

/* page content */
.page {
    flex-grow: 1;
    padding: 28px 16px 0;
    color: #000;
}
.login-title,
.answer-title {
    margin: 0;
    font-size: 62px;
    font-weight: 700;
}
.answer-title {
    margin-top: 181px;
}
.form-row {
    display: flex;
    align-items: center;
    gap: 12px;
    margin-top: 55px;
}
.answer-row {
    margin-top: 57px;
}
.text-input {
    width: 305px;
    height: 41px;
    padding: 2px 6px;
    border: 2px solid #767676;
    border-radius: 4px;
    background-color: #fff;
    font-family: inherit;
    font-size: 26.67px;
}
.text-input::placeholder {
    color: #757575;
}
.form-button {
    height: 41px;
    padding: 0 14px;
    border: 2px solid #767676;
    border-radius: 4px;
    background-color: #efefef;
    color: #000;
    font-family: inherit;
    font-size: 26.67px;
}
.hint {
    margin: 120px 0 0;
    font-size: 37.44px;
    font-weight: 700;
    word-spacing: 0.4px;
}
.answer-label {
    font-size: 33px;
    letter-spacing: 0.1px;
}

/* download shelf */
.shelf {
    height: 114px;
    flex-shrink: 0;
    display: flex;
    align-items: center;
    padding-left: 8px;
    border-top: 2px solid #dee1e6;
    background: linear-gradient(to bottom, #fff 40%, #f0f0f0 100%);
}
.download {
    width: 466px;
    height: 87px;
    display: flex;
    align-items: center;
    padding: 0 36px 0 37px;
    border-right: 2px solid #ccc;
}
.download-name {
    margin-left: 29px;
    font-size: 27px;
    color: #3c4043;
}
.chevron {
    margin-left: auto;
}
.png-tag {
    font-size: 5px;
    fill: #555;
    text-anchor: middle;
}
.show-all {
    margin-left: auto;
    width: 162px;
    height: 63px;
    border: 2px solid #dadce0;
    border-radius: 6px;
    background-color: #fff;
    color: #1a73e8;
    font-size: 24px;
    font-weight: 500;
    line-height: 59px;
    text-align: center;
    font-family: "Noto Sans CJK TC", sans-serif;
}
.shelf-close {
    margin: 0 25px 0 24px;
}

/* dock */
.desktop-row {
    margin-top: 4px;
    height: 126px;
    flex-shrink: 0;
    display: flex;
}
.wall-left,
.wall-right {
    flex-shrink: 0;
    display: block;
}
.dock {
    width: 2396px;
    flex-shrink: 0;
    display: flex;
    padding: 17px 0 0 8px;
    border-radius: 12px 12px 0 0;
    background: linear-gradient(to right, #5a5053 0%, #5c5355 40%, #5f6274 54%, #727a90 68%, #86696c 76%, #c9735a 83%, #c4715c 88%, #96696a 92%, #66647c 100%);
}
.dock-item {
    width: 101.5px;
    height: 109px;
    flex-shrink: 0;
    display: flex;
    flex-direction: column;
    align-items: center;
    position: relative;
}
.dock-item svg {
    display: block;
    overflow: visible;
}
.dot {
    width: 8px;
    height: 8px;
    margin-top: 13px;
    border-radius: 50%;
    background-color: #000;
}
.dot-warm {
    background-color: #3d0000;
}
.dot-bar {
    width: 98px;
    height: 8px;
    margin: 13px 24px 0 0;
    border-radius: 4px;
    background-color: #240000;
}
.badge {
    position: absolute;
    top: -4px;
    left: 65px;
    width: 36px;
    height: 36px;
    border-radius: 50%;
    background-color: #f0423c;
    color: #fff;
    font-size: 22px;
    line-height: 36px;
    text-align: center;
}
.dock-sep {
    width: 2px;
    height: 94px;
    flex-shrink: 0;
    margin: 0 22px 0 23px;
    background-color: #6a4b4d;
}
.cal-month {
    fill: #fff;
    font-size: 16px;
    text-anchor: middle;
    font-family: "Noto Sans CJK TC", sans-serif;
}
.cal-day {
    fill: #111;
    font-size: 50px;
    font-family: Lato, sans-serif;
    font-weight: 300;
    text-anchor: middle;
}
.pages-tag {
    fill: #fff;
    font-size: 9px;
}
.key-tag {
    fill: #444;
    font-size: 4px;
    font-weight: 700;
}
.term-prompt {
    fill: #2fdd4a;
    font-size: 26px;
    font-family: "Liberation Mono", monospace;
}
.line-big {
    fill: #1fc022;
    font-size: 18px;
    font-weight: 700;
    text-anchor: middle;
}
```
